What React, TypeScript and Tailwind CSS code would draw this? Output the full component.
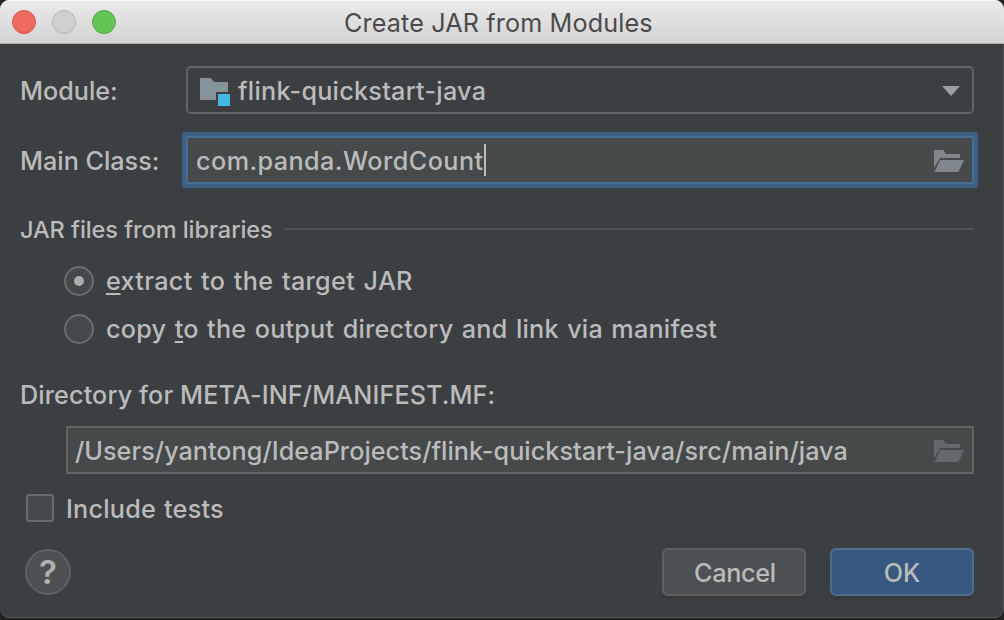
import React from "react";

function OpenFolder({ className }: { className: string }) {
  return (
    <svg width="30" height="24" viewBox="0 -2 30 24" className={className} fill="currentColor">
      <path d="M0 0H9.5L12 4H26V8H6L0 18Z" />
      <path d="M6 10H30L24.5 22H0.5Z" />
    </svg>
  );
}

function ModuleIcon() {
  return (
    <svg width="30" height="32" viewBox="0 -4 30 32" className="shrink-0">
      <path d="M0 0H10.5L14.5 4H28V14H16V22H0Z" fill="#87939a" />
      <rect x="18" y="16" width="12" height="12" fill="#40b6e0" />
    </svg>
  );
}

function Radio({ checked }: { checked?: boolean }) {
  return (
    <span className="flex size-[30px] shrink-0 items-center justify-center rounded-full border-2 border-[#6b6b6b] bg-[#43494a]">
      {checked && <span className="size-[10px] rounded-full bg-[#adadad]" />}
    </span>
  );
}

export default function App() {
  return (
    <div className="h-[620px] w-[1004px] overflow-hidden bg-[#232325] pb-[2px] font-['Inter','Liberation_Sans',sans-serif] text-[25.2px] leading-[30px] font-[450] whitespace-nowrap text-[#bbbbbb]">
      <div className="flex h-[618px] flex-col overflow-hidden rounded-[9px] border-b border-[#55585a] bg-[#3c3f41]">
        <header className="grid h-[44px] shrink-0 grid-cols-[344px_1fr] border-b border-[#b0b0b0] bg-linear-to-b from-[#ebebeb] to-[#d3d3d3] shadow-[inset_0_1px_0_#f7f7f7]">
          <div className="flex items-start gap-4 pt-[10px] pl-3">
            <span className="size-6 rounded-full border border-[#d9564c] bg-[#ee6a5f]" />
            <span className="size-6 rounded-full border border-[#b3b3b3] bg-[#d0d0d0]" />
            <span className="size-6 rounded-full border border-[#52a842] bg-[#61c654]" />
          </div>
          <h1 className="pt-[8px] font-normal tracking-[0.13px] text-[#4b4b4b]">Create JAR from Modules</h1>
        </header>

        <main className="flex flex-1 flex-col border-r border-[#505355] pr-[29px] pl-5">
          <div className="mt-[22px] flex h-[48px] items-center">
            <label className="w-[166px] pt-[2px]">Module:</label>
            <div className="flex h-[48px] flex-1 items-center rounded-[5px] border-2 border-[#646464] pr-[12px] pl-3">
              <ModuleIcon />
              <span className="flex-1 pt-[2px] pl-2 tracking-[0.25px]">flink-quickstart-java</span>
              <svg width="18" height="12" viewBox="0 -2 18 12" fill="#9c9fa1">
                <path d="M0 0H18L9 10Z" />
              </svg>
            </div>
          </div>

          <div className="mt-[22px] flex h-[48px] items-center">
            <label className="w-[166px] pt-[2px]">Main Class:</label>
            <div className="-mx-1 flex-1 rounded-[3px] bg-[#3d6185] p-1">
              <div className="flex h-[48px] items-center border-2 border-[#466d94] bg-[#45494a] pr-[8px] pl-2">
                <span className="w-[288px] pt-[2px] tracking-[0.44px]">com.panda.WordCount</span>
                <span className="h-8 w-[2px] bg-[#bbbbbb]" />
                <OpenFolder className="ml-auto text-[#7f868c]" />
              </div>
            </div>
          </div>

          <div className="mt-[30px] flex h-[30px] items-center">
            <h2 className="w-[264px] pt-[1px] text-[23.5px] font-[450] tracking-[-0.06px]">JAR files from libraries</h2>
            <span className="h-[2px] flex-1 bg-[#515151]" />
          </div>

          <div className="mt-[22px] flex flex-col gap-[18px] pl-[44px]">
            <label className="flex h-[30px] items-center gap-3">
              <Radio checked />
              <span className="tracking-[0.32px] [word-spacing:1.5px]">
                <u className="decoration-2 underline-offset-[3px]">e</u>xtract to the target JAR
              </span>
            </label>
            <label className="flex h-[30px] items-center gap-3">
              <Radio />
              <span className="tracking-[0.22px] [word-spacing:1.5px]">
                copy <u className="decoration-2 underline-offset-[3px]">t</u>o the output directory and link via manifest
              </span>
            </label>
          </div>

          <div className="mt-[36px] h-[30px] tracking-[0.11px]">Directory for META-INF/MANIFEST.MF:</div>

          <div className="mt-[16px] ml-[46px] flex h-[48px] items-center border-2 border-[#646464] bg-[#45494a] pr-[8px] pl-[7px]">
            <span className="pt-[2px] tracking-[0.03px]">/Users/yantong/IdeaProjects/flink-quickstart-java/src/main/java</span>
            <OpenFolder className="ml-auto text-[#62696c]" />
          </div>

          <label className="mt-[20px] flex h-[28px] items-center gap-3 pl-[6px]">
            <span className="size-7 rounded-[4px] border-2 border-[#6b6b6b] bg-[#43494a]" />
            <span className="pt-[2px] tracking-[0.24px] [word-spacing:1px]">Include tests</span>
          </label>

          <div className="mt-[26px] flex h-[48px] items-center gap-6 pl-[5px]">
            <button className="mr-auto flex size-[46px] items-center justify-center rounded-full border-2 border-[#5e6060] bg-[#4c5052] text-[33px] font-semibold text-[#afb1b3]">
              ?
            </button>
            <button className="h-[48px] w-[144px] rounded-[6px] border-2 border-[#5e6060] bg-[#4c5052] pt-[2px] pl-[2px] tracking-[-0.3px] shadow-[0_3px_1px_#37393a]">
              Cancel
            </button>
            <button className="h-[48px] w-[144px] rounded-[6px] border-2 border-[#4c708c] bg-[#365880] pt-[2px] shadow-[0_3px_1px_#37393a]">
              OK
            </button>
          </div>
        </main>
      </div>
    </div>
  );
}
